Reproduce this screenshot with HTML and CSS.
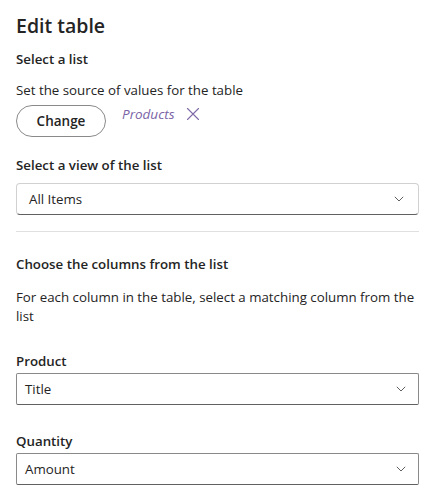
FILE: index.html
```html
<!DOCTYPE html>
<html lang="en">
<head>
<meta charset="utf-8">
<title>Edit table</title>
<link rel="stylesheet" href="styles.css">
</head>
<body>
<main class="panel">
  <h1 class="title">Edit table</h1>
  <h2 class="label first">Select a list</h2>
  <p class="text src">Set the source of values for the table</p>
  <div class="source-row">
    <button class="btn" type="button">Change</button>
    <span class="source-name">Products</span>
    <svg class="close" width="14" height="14" viewBox="0 0 14 14" aria-hidden="true">
      <path d="M1.5 1.5 L12.5 12.5 M12.5 1.5 L1.5 12.5" stroke="#7f6aa8" stroke-width="1.1" fill="none" stroke-linecap="round"/>
    </svg>
  </div>
  <h2 class="label view">Select a view of the list</h2>
  <div class="dropdown">
    <span>All Items</span>
    <svg class="chev" width="10" height="6" viewBox="0 0 10 6" aria-hidden="true"><path d="M0.8 0.8 L5 5 L9.2 0.8" stroke="#616161" stroke-width="1" fill="none"/></svg>
  </div>
  <hr class="divider">
  <h2 class="label cols">Choose the columns from the list</h2>
  <p class="text desc">For each column in the table, select a matching column from the list</p>
  <h2 class="label field product">Product</h2>
  <div class="dropdown field-dd">
    <span>Title</span>
    <svg class="chev" width="10" height="6" viewBox="0 0 10 6" aria-hidden="true"><path d="M0.8 0.8 L5 5 L9.2 0.8" stroke="#616161" stroke-width="1" fill="none"/></svg>
  </div>
  <h2 class="label field quantity">Quantity</h2>
  <div class="dropdown field-dd">
    <span>Amount</span>
    <svg class="chev" width="10" height="6" viewBox="0 0 10 6" aria-hidden="true"><path d="M0.8 0.8 L5 5 L9.2 0.8" stroke="#616161" stroke-width="1" fill="none"/></svg>
  </div>
</main>
</body>
</html>
```

FILE: styles.css
```css
* { box-sizing: border-box; }
html, body { margin: 0; padding: 0; background: #ffffff; }
body {
  font-family: "Segoe UI", "Open Sans", "Noto Sans", sans-serif;
  color: #242424;
  font-size: 13.3px;
}
.panel {
  padding: 12px 15px 0 16px;
  display: flex;
  flex-direction: column;
}
.title {
  margin: 0;
  font-size: 19.5px;
  font-weight: 600;
  line-height: 28px;
}
.label {
  margin: 0;
  font-size: 13.3px;
  font-weight: 600;
  line-height: 20px;
}
.label.first { margin-top: 9px; }
.text {
  margin: 0;
  font-size: 13.3px;
  line-height: 19px;
}
.text.src { margin-top: 12px; }
.source-row {
  display: flex;
  align-items: flex-start;
  margin-top: 4px;
}
.btn {
  font-family: inherit;
  font-size: 13.5px;
  font-weight: 600;
  color: #242424;
  background: #fff;
  border: 1px solid #8a8a8a;
  border-radius: 16px;
  width: 90px;
  height: 32px;
  padding: 0;
  margin-top: 1px;
}
.source-name {
  margin-left: 16px;
  margin-top: 1px;
  font-style: italic;
  font-size: 13.5px;
  color: #7a64a6;
  line-height: 18px;
}
.close { margin-left: 11px; margin-top: 3px; }
.label.view { margin-top: 18px; }
.dropdown {
  display: flex;
  align-items: center;
  justify-content: space-between;
  height: 32px;
  margin-top: 8px;
  padding: 0 14px 0 12px;
  border: 1px solid #d1d1d1;
  border-bottom-color: #616161;
  border-radius: 4px;
  font-size: 13.3px;
  color: #242424;
}
.dropdown.field-dd {
  border-color: #8a8a8a;
  border-bottom-color: #616161;
  border-radius: 2px;
  padding: 0 12px 0 8px;
}
.divider {
  border: 0;
  border-top: 1px solid #e0e0e0;
  margin: 16px 0 0 0;
}
.label.cols { margin-top: 22px; }
.text.desc { margin-top: 14px; }
.label.product { margin-top: 25px; }
.label.quantity { margin-top: 26px; }
.label.field + .dropdown { margin-top: 2px; }
```
